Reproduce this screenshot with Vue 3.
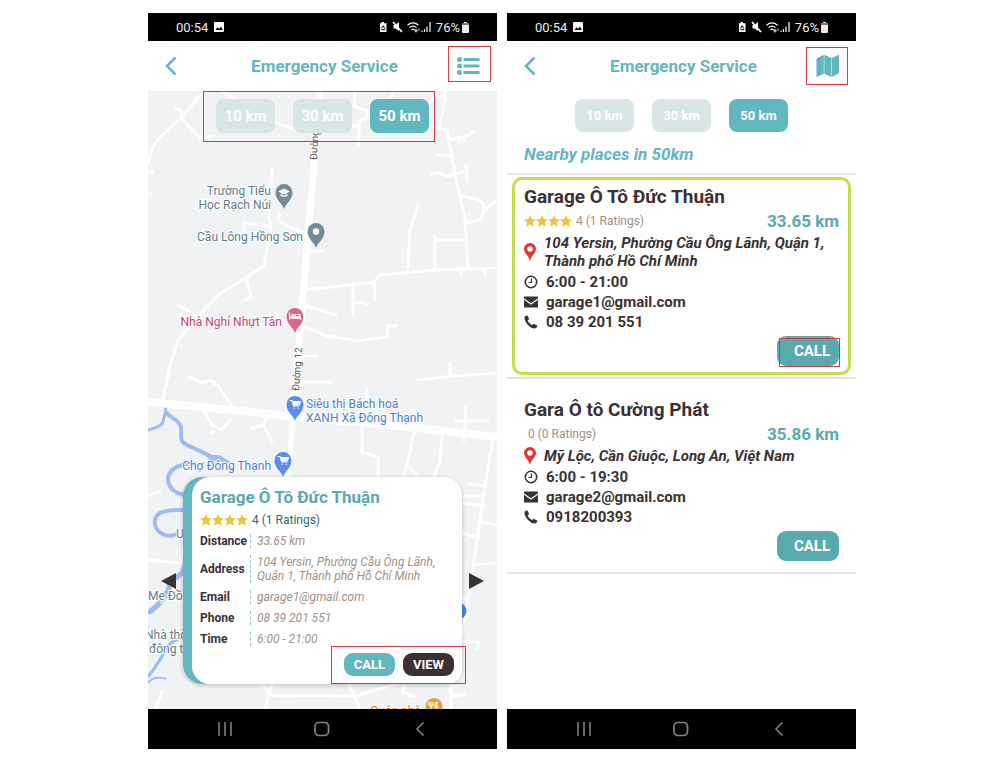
<script setup>
import { ref } from 'vue'

const distances = [10, 30, 50]
const mapRange = ref(50)
const listRange = ref(50)

const details = [
  { label: 'Distance', value: '33.65 km' },
  { label: 'Address', value: '104 Yersin, Phường Cầu Ông Lãnh, Quận 1, Thành phố Hồ Chí Minh' },
  { label: 'Email', value: 'garage1@gmail.com' },
  { label: 'Phone', value: '08 39 201 551' },
  { label: 'Time', value: '6:00 - 21:00' },
]

const garages = [
  {
    name: 'Garage Ô Tô Đức Thuận', stars: 4, rating: '4 (1 Ratings)', distance: '33.65 km',
    address: '104 Yersin, Phường Cầu Ông Lãnh, Quận 1, Thành phố Hồ Chí Minh',
    time: '6:00 - 21:00', email: 'garage1@gmail.com', phone: '08 39 201 551', selected: true,
  },
  {
    name: 'Gara Ô tô Cường Phát', stars: 0, rating: '0 (0 Ratings)', distance: '35.86 km',
    address: 'Mỹ Lộc, Cần Giuộc, Long An, Việt Nam',
    time: '6:00 - 19:30', email: 'garage2@gmail.com', phone: '0918200393', selected: false,
  },
]

const screens = ['map', 'list']

const pinPath = 'M0 0C-1.200 -5 -8.500 -9 -8.500 -16.500A8.500 8.500 0 0 1 8.500 -16.500C8.500 -9 1.200 -5 0 0Z'
const cartPath = 'M-5 -20.500h2l1.800 5.500h5l1.700 -4.500h-7.900M-1 -12.800h.2M3.200 -12.800h.2'
</script>

<template>
  <main class="page">
    <section v-for="screen in screens" :key="screen" class="phone">
      <div class="status">
        <span>00:54</span>
        <svg class="status-photo" viewBox="0 0 10 10" width="10" height="10">
          <rect width="10" height="10" rx="1" fill="#fff" />
          <path d="M1.500 8 3.500 5.300 5 7 6.800 4.500 8.800 8Z" fill="#000" />
        </svg>
        <span class="spacer"></span>
        <svg width="54" height="14" viewBox="0 0 54 14" fill="none" stroke="#fff">
          <path d="M2 3.200h1.500V2h2.500v1.200h2.500V12H2Z" fill="#fff" stroke="none" />
          <path d="M3.500 8.500 5.200 5.700 6.900 8.500M3.400 9.700h3.800" stroke="#000" />
          <path d="M15.500 5h2l3.500-3v9L17.500 8.500h-2Z" fill="#fff" stroke="none" />
          <path d="M15 2l9 10" stroke-width="1.700" />
          <path d="M29.500 5.200q5.500-4.600 11 0M31.500 7.600q3.500-3 7 0M33.500 9.800q1.500-1.200 3 0" stroke-width="1.200" />
          <path d="M38 9v3.500M36.300 10.800h3.500M41 8.500v2" />
          <path d="M44 10.500V12M46.500 9v3M49 6.500V12M52 2v10" stroke-width="1.200" />
        </svg>
        <span>76%</span>
        <svg width="7" height="12" viewBox="0 0 7 12">
          <path d="M2 1h3v1h2v9q0 1-1 1H1q-1 0-1-1V2h2Z" fill="#eee" />
          <path d="M0 2h7v2H0Z" fill="#777" />
        </svg>
      </div>

      <header class="header">
        <button class="icon-button back" type="button" aria-label="Back">
          <svg width="14" height="20" viewBox="0 0 14 20">
            <path d="M11.500 1.500 3 10l8.500 8.500" fill="none" stroke="#62b6c0" stroke-width="2.500" />
          </svg>
        </button>
        <h1>Emergency Service</h1>
        <button v-if="screen === 'map'" class="icon-button marked list-toggle" type="button" aria-label="Show list">
          <svg width="24" height="18" viewBox="0 0 24 18" fill="#62b6c0">
            <circle cx="2.500" cy="2.500" r="2.500" /><circle cx="2.500" cy="9" r="2.500" /><circle cx="2.500" cy="15.500" r="2.500" />
            <path d="M6.500 1h16v3h-16ZM6.500 7.500h16v3h-16ZM6.500 14h16v3h-16Z" />
          </svg>
        </button>
        <button v-else class="icon-button marked map-toggle" type="button" aria-label="Show map">
          <svg width="24" height="24" viewBox="0 0 24 24" fill="#62b6c0">
            <path d="M.5 4.500 7.800 .8v19L.5 23ZM8.300 .8l7 3.200v19l-7-3.200ZM15.800 4 23 .8v18.500L15.800 23Z" />
          </svg>
        </button>
      </header>

      <div v-if="screen === 'map'" class="map-pane">
        <svg class="map" viewBox="0 0 349 618" preserveAspectRatio="xMidYMin slice">
          <rect width="349" height="618" fill="#f1f2f4" />
          <g fill="none" stroke="#9dbcf3" stroke-width="4" stroke-linejoin="round">
            <path d="M18 315Q17 327 14 333 9 337 0 339" stroke-width="3" />
            <path d="M18 321C23 328 31 328 33 336C34 343 30 350 39 354L52 360 64 366" stroke-width="4" />
            <path d="M59 365h12l10 6-12 2Z" fill="#9dbcf3" stroke-width="2" />
            <path d="M49 373C33 371 21 378 20 387C20 397 27 402 36 404" />
            <path d="M36 419C25 419 18 419 12 422C4 427 6 438 13 442C18 446 24 445 29 443" />
            <path d="M37 474C36 486 24 486 22 493C20 505 10 515 0 522" stroke-width="5" />
            <path d="M37 546C27 548 20 553 17 560C12 570 6 578 0 586" stroke-width="3" />
            <path d="M0 592C4 587 10 585 18 588" stroke-width="2" />
          </g>
          <g fill="none" stroke="#fff" stroke-width="3" stroke-linejoin="round" stroke-linecap="round">
            <path d="M56 0 32 28 10 48 4 58 0 72M27 18q8-1 7 10l18 19 13-2M73 0l60 34 20 6M0 80l4 1M0 102l3 1" />
            <path d="M207 0l-1 15 13 5v7l-7 3-2 24M204 35h8M245 2l-3 5M280 14l7-9h8M297 0l-2 20-4 17" />
            <path d="M280 34l19 5 8 45 10 43 3 50M302 49l20-5 3-4M311 47v4M316 46v4M290 64h14M283 84l6-2 11 3 18-5M318 75l1 15M312 105l17 3 6 4 1 8 13-11M336 120l-3 8-13 4" />
            <path d="M124 78l-3 49 2 9-7 39-18 12-27 16-19 21-22 25-8 25-7 34M30 214l20 11M98 187l5 19-6 3M96 146v-14l24 3 3 3M131 122v8l12 7 15 5" />
            <path d="M270 114l-8 25-2 39M287 145v34M287 149h31M160 160h15" />
            <path d="M157 199l69-8 6-7 55-5 62-2M313 178v6M337 177v6M205 192v32M205 211l12 1 2 2M226 191l1 19M156 214l32 10" />
            <path d="M154 235l25 10 30 5 30-4 1-11 8 0M153 265h16M153 291h29M270 289l35-4 44-3M302 272v12M219 298v20" />
            <path d="M42 286l12 6 8-3 8 6 14 20M56 320l9 15 9 4 8-10M65 340l-2 2M120 325l-5 9-11 3M115 334l9 16M214 333v28l16 5v26M266 341l-5 25-7 24M260 375l8 8M294 346l-2 24-8 20M307 330h33M318 316l-2 34" />
            <path d="M345 348l-8 47-15 101-8 48M337 395l-15-2M334 405h-18M336 415l-22-3M334 431l15 3M331 447l-20-6M326 474l21-2M320 508l-14-2" />
            <path d="M0 405l12-5M0 469l32 3 3-17M314 550l17 1-2 7M14 600l-6 17M112 592l12 12 85 1 18-6 23-6M124 593l-7 25M201 594l11 24M257 594l-3 7 12 4M303 591v26M303 606l14-3" />
          </g>
          <g fill="none" stroke="#fff">
            <path d="M172 0 168 50 160 146 154 216 147 302 145 328" stroke-width="7" />
            <path d="M145 325 140 390" stroke-width="5" />
            <path d="M0 311 83 319 147 326 233 333 349 346" stroke-width="8" />
          </g>

          <g class="road-label">
            <text transform="translate(169 69) rotate(-87)">Đường 12</text>
            <text transform="translate(151 300) rotate(-86)">Đường 12</text>
          </g>
          <g class="place slate">
            <text x="123" y="104" text-anchor="end">Trường Tiểu</text>
            <text x="123" y="118" text-anchor="end">Học Rạch Núi</text>
            <text x="155" y="150" text-anchor="end">Cầu Lông Hồng Sơn</text>
            <text x="28" y="447">U</text>
            <text x="0" y="509">Mẹ Đồ</text>
            <text x="-3" y="548">Nhà thờ</text>
            <text x="1" y="562">đông t</text>
          </g>
          <text class="place pink" x="134" y="235" text-anchor="end">Nhà Nghỉ Nhựt Tân</text>
          <g class="place blue">
            <text x="158" y="317">Siêu thị Bách hoá</text>
            <text x="158" y="331">XANH Xã Đông Thạnh</text>
            <text x="123" y="379" text-anchor="end">Chợ Đông Thạnh</text>
          </g>
          <text class="place orange" x="273" y="624" text-anchor="end">Quán nhà</text>

          <g transform="translate(136 118)">
            <path :d="pinPath" fill="#768b98" />
            <path d="M-6 -17.500 0 -20.500 6 -17.500 0 -14.500ZM-3.500 -15.200v2q3.500 2 7 0v-2L0 -13.300Z" fill="#fff" />
          </g>
          <g transform="translate(168 157)">
            <path :d="pinPath" fill="#768b98" />
            <circle cy="-16.500" r="3.200" fill="#fff" />
          </g>
          <g transform="translate(147 242)">
            <path :d="pinPath" fill="#dc6592" />
            <path d="M-5.500 -20.500v7M-5.500 -14.800h11v1.600M-4.500 -16.200h9.500v-2.300h-5v2" fill="none" stroke="#fff" stroke-width="1.200" />
            <circle cx="-2.500" cy="-18" r="1.200" fill="#fff" />
          </g>
          <g v-for="spot in [[147, 330], [135, 386]]" :key="spot[1]" :transform="`translate(${spot[0]} ${spot[1]})`">
            <path :d="pinPath" fill="#5b8def" />
            <path d="M-3 -19h7.500l-1.600 3.500h-4.700Z" fill="#fff" />
            <path :d="cartPath" fill="none" stroke="#fff" stroke-width="1.200" stroke-linecap="round" />
          </g>
          <circle cx="310" cy="520" r="8.500" fill="#4b80e8" />
          <g transform="translate(286 632)">
            <path :d="pinPath" fill="#e8a03c" />
            <path d="M-3 -21v8M-5 -21v3q2 1.500 4 0v-3M3 -13v-8q-2 1-2 5h2" fill="none" stroke="#fff" stroke-width="1.200" />
          </g>
        </svg>

        <div class="filters marked">
          <button v-for="d in distances" :key="d" type="button" :class="{ active: mapRange === d }" @click="mapRange = d">{{ d }} km</button>
        </div>

        <div class="carousel">
          <button class="arrow" type="button" aria-label="Previous place">
            <svg width="15" height="16" viewBox="0 0 15 16"><path d="M0 8 15 0v16Z" fill="#3a3132" /></svg>
          </button>
          <article class="place-card">
            <div class="place-body">
              <h2>Garage Ô Tô Đức Thuận</h2>
              <div class="rating">
                <svg v-for="n in 4" :key="n" width="12" height="12" viewBox="0 0 12 12"><path d="M6 0 7.800 4.100 12 4.500 8.900 7.300 9.800 11.700 6 9.500 2.200 11.700 3.100 7.300 0 4.500 4.200 4.100Z" fill="#e9c53f" /></svg>
                <span>4 (1 Ratings)</span>
              </div>
              <dl>
                <div v-for="row in details" :key="row.label">
                  <dt>{{ row.label }}</dt>
                  <dd>{{ row.value }}</dd>
                </div>
              </dl>
              <div class="actions marked">
                <button type="button">CALL</button>
                <button type="button" class="dark">VIEW</button>
              </div>
            </div>
          </article>
          <button class="arrow" type="button" aria-label="Next place">
            <svg width="15" height="16" viewBox="0 0 15 16"><path d="M15 8 0 0v16Z" fill="#3a3132" /></svg>
          </button>
        </div>
      </div>

      <div v-else class="list-pane">
        <div class="filters">
          <button v-for="d in distances" :key="d" type="button" :class="{ active: listRange === d }" @click="listRange = d">{{ d }} km</button>
        </div>
        <h2 class="nearby">Nearby places in {{ listRange }}km</h2>
        <ul>
          <li v-for="g in garages" :key="g.name">
            <article class="garage" :class="{ selected: g.selected }">
              <h3>{{ g.name }}</h3>
              <div class="summary">
                <div class="rating">
                  <svg v-for="n in g.stars" :key="n" width="12" height="12" viewBox="0 0 12 12"><path d="M6 0 7.800 4.100 12 4.500 8.900 7.300 9.800 11.700 6 9.500 2.200 11.700 3.100 7.300 0 4.500 4.200 4.100Z" fill="#e9c53f" /></svg>
                  <span>{{ g.rating }}</span>
                </div>
                <strong>{{ g.distance }}</strong>
              </div>
              <div class="line address">
                <svg width="12" height="18" viewBox="0 0 12 18"><path d="M6 18C5 13 0 10 0 6a6 6 0 0 1 12 0C12 10 7 13 6 18ZM6 3.200a2.800 2.800 0 1 0 0 5.600 2.800 2.800 0 0 0 0-5.600Z" fill="#e2352b" fill-rule="evenodd" /></svg>
                <span>{{ g.address }}</span>
              </div>
              <div class="line">
                <svg width="14" height="14" viewBox="0 0 14 14" fill="none" stroke="#3a3132"><circle cx="7" cy="7" r="5.700" stroke-width="1.600" /><path d="M7.500 3.500V7.500H4.500" stroke-width="1.200" /></svg>
                <span>{{ g.time }}</span>
              </div>
              <div class="line">
                <svg width="14" height="12" viewBox="0 0 14 12" fill="#3a3132"><path d="M0 .5h14v1.800L7 7.300 0 2.300ZM0 3.800l7 5 7-5v7.700H0Z" /></svg>
                <span>{{ g.email }}</span>
              </div>
              <div class="line">
                <svg width="14" height="14" viewBox="0 0 14 14" fill="#3a3132"><path d="M.5 2.200Q1 .7 3 .5q.7 0 1 1l.9 2q.2.700-.4 1.200l-1 .9Q4.800 8.500 8 10.200l1.100-1.100q.4-.4 1-.1l2.500 1.300q.9.500.6 1.200-.5 1.800-2.700 2Q7.500 13.500 4 10 .3 6 .5 2.200Z" /></svg>
                <span>{{ g.phone }}</span>
              </div>
              <button type="button" class="call" :class="{ marked: g.selected }">CALL</button>
            </article>
          </li>
        </ul>
      </div>

      <nav class="navbar" aria-label="System">
        <button type="button" aria-label="Recent apps">
          <svg width="14" height="14" viewBox="0 0 14 14"><path d="M1 0v14M7 0v14M13 0v14" stroke="#858585" stroke-width="1.500" /></svg>
        </button>
        <button type="button" aria-label="Home">
          <svg width="16" height="16" viewBox="0 0 16 16"><rect x="1" y="1.500" width="13.500" height="13" rx="4" fill="none" stroke="#858585" stroke-width="1.700" /></svg>
        </button>
        <button type="button" aria-label="Back">
          <svg width="10" height="14" viewBox="0 0 10 14"><path d="M8.500 .5 2 7l6.500 6.500" fill="none" stroke="#858585" stroke-width="1.500" /></svg>
        </button>
      </nav>
    </section>
  </main>
</template>

<style>
body {
  background: #fff;
}
</style>

<style scoped>
* {
  box-sizing: border-box;
}
.page {
  display: flex;
  gap: 10px;
  min-height: 100vh;
  padding: 13px 138px 19px 148px;
  font-family: Roboto, "Noto Sans", sans-serif;
  color: #3a3132;
}
.phone {
  flex: 1;
  min-width: 0;
  display: flex;
  flex-direction: column;
}
h1, h2, h3, dl, dd, ul {
  margin: 0;
  padding: 0;
}
ul {
  list-style: none;
}
button {
  font: inherit;
  border: 0;
  padding: 0;
  background: none;
  cursor: pointer;
}
svg {
  display: block;
  flex: none;
}
.status {
  display: flex;
  align-items: center;
  height: 28px;
  padding: 0 28px;
  background: #000;
  color: #eee;
  font-size: 13px;
}
.status-photo {
  margin-left: 6px;
}
.spacer {
  flex: 1;
}
.status span:last-of-type {
  margin: 0 2px 0 4px;
}
.header {
  display: flex;
  align-items: center;
  justify-content: space-between;
  height: 50px;
  padding: 0 16px;
}
.header h1 {
  font-size: 17px;
  line-height: 24px;
  font-weight: 700;
  color: #62b6c0;
}
.icon-button {
  display: flex;
  align-items: center;
  width: 24px;
  height: 32px;
}
.icon-button.back {
  width: 28px;
}
.marked {
  position: relative;
}
.marked::after {
  content: "";
  position: absolute;
  border: 1px solid #d23a3d;
  pointer-events: none;
}
.list-toggle::after {
  inset: -4px -10px 0 -9px;
}
.map-toggle::after {
  inset: -3px -8px -3px -10px;
}
.filters {
  display: flex;
  justify-content: center;
  gap: 18px;
}
.filters button {
  width: 59px;
  height: 33px;
  border-radius: 8px;
  background: #d9e6e6;
  color: #fff;
  font-size: 13px;
  font-weight: 700;
}
.filters button.active {
  background: #62b6c0;
}
.map-pane {
  position: relative;
  flex: 1;
  display: flex;
  flex-direction: column;
  justify-content: space-between;
  overflow: hidden;
  padding: 0 0 25px;
}
.map {
  position: absolute;
  inset: 0;
  width: 100%;
  height: 100%;
}
.map-pane .filters {
  align-self: center;
  padding: 8px 0;
}
.map-pane .filters button {
  height: 34px;
  font-size: 15px;
}
.map-pane .filters::after {
  inset: 0 -6px -1px -13px;
}
.road-label {
  font-size: 10px;
  fill: #555;
}
.place {
  font-size: 12px;
  stroke: #fff;
  stroke-width: 2px;
  paint-order: stroke;
}
.slate {
  fill: #607d86;
}
.pink {
  fill: #c2437a;
}
.blue {
  fill: #4a7dcb;
}
.orange {
  fill: #c77a20;
}
.carousel {
  position: relative;
  display: flex;
  align-items: center;
  gap: 7px;
  padding: 0 13px;
}
.place-card {
  flex: 1;
  min-width: 0;
  padding-left: 9px;
  background: #62b6c0;
  border-radius: 20px 20px 16px 20px;
  box-shadow: 0 1px 4px rgba(0, 0, 0, 0.25);
}
.place-body {
  padding: 9px 8px 8px;
  background: #fff;
  border-radius: 18px 18px 14px 18px;
}
.place-body h2 {
  font-size: 17px;
  line-height: 22px;
  font-weight: 700;
  color: #5aa9ae;
}
.rating {
  display: flex;
  align-items: center;
  height: 24px;
  font-size: 12px;
  color: #2b6b6c;
}
.rating span {
  margin-left: 4px;
}
dl {
  padding-top: 2px;
}
dl > div {
  display: flex;
  align-items: center;
  font-size: 12px;
  line-height: 14px;
  padding-bottom: 7px;
}
dt {
  width: 50px;
  font-weight: 700;
}
dd {
  flex: 1;
  position: relative;
  padding-left: 7px;
  font-style: italic;
  color: #9c9185;
}
dd::before {
  content: "";
  position: absolute;
  left: 0;
  top: 0;
  bottom: 0;
  border-left: 1px dashed #8ec7c9;
}
.actions {
  display: flex;
  justify-content: flex-end;
  gap: 8px;
}
.actions::after {
  inset: -7px -12px -8px 131px;
}
.actions button {
  width: 51px;
  height: 23px;
  border-radius: 9px;
  background: #62b6c0;
  color: #fff;
  font-size: 13px;
  font-weight: 700;
}
.actions button.dark {
  background: #3a3132;
}
.list-pane {
  flex: 1;
  padding-top: 8px;
}
.nearby {
  padding: 10px 17px 7px;
  border-bottom: 2px solid #e6e6e6;
  font-size: 17px;
  line-height: 24px;
  font-weight: 700;
  font-style: italic;
  color: #62b6c0;
}
li {
  padding: 2px 5px;
  border-bottom: 2px solid #e3e3e3;
}
li + li {
  padding-top: 11px;
}
.garage {
  display: flex;
  flex-direction: column;
  padding: 5px 9px 6px;
  border: 3px solid transparent;
  border-radius: 10px;
}
.garage.selected {
  border-color: #bfe04a;
}
.garage h3 {
  font-size: 19px;
  line-height: 24px;
  font-weight: 700;
}
.summary {
  display: flex;
  justify-content: space-between;
  align-items: center;
  padding-bottom: 1px;
}
.summary .rating {
  color: #9c9185;
}
.summary strong {
  font-size: 17px;
  color: #5aa9ae;
}
.line {
  display: flex;
  align-items: center;
  gap: 8px;
  font-size: 15px;
  line-height: 20px;
  font-weight: 700;
}
.line.address {
  padding-bottom: 2px;
  line-height: 18px;
  font-style: italic;
}
.call {
  align-self: flex-end;
  width: 62px;
  height: 30px;
  margin-top: 4px;
  padding: 0 8px 0 16px;
  border-radius: 9px;
  background: #5aa9ae;
  color: #fff;
  font-size: 15px;
  font-weight: 700;
}
.call::after {
  inset: 2px -1px -1px 2px;
}
.navbar {
  display: flex;
  align-items: center;
  justify-content: space-around;
  height: 40px;
  padding: 0 28px;
  background: #000;
}
.navbar button {
  display: flex;
  align-items: center;
  justify-content: center;
  width: 40px;
  height: 40px;
}
</style>
